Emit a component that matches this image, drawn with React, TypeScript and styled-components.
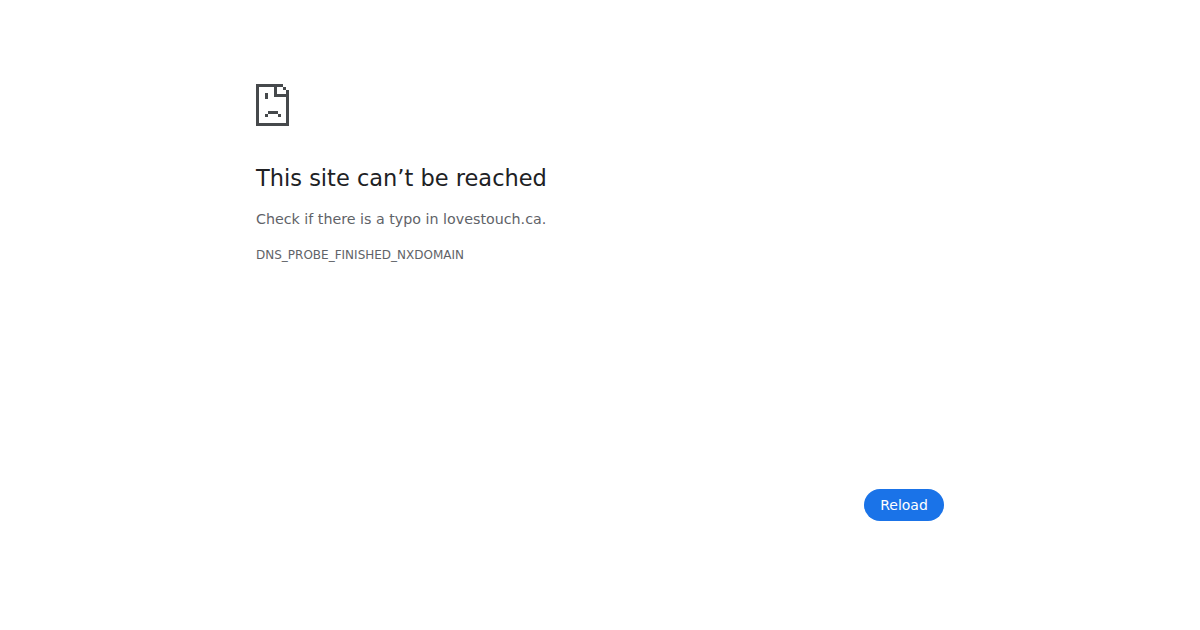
import styled, { createGlobalStyle } from 'styled-components'

const GlobalStyle = createGlobalStyle`
  html, body {
    margin: 0;
    background: #fff;
  }
  body {
    font-family: 'DejaVu Sans', sans-serif;
    font-size: 15px;
    color: #5f6368;
  }
`

const SadFile = () => (
  <Icon viewBox="0 0 33 42" width="33" height="42" aria-hidden="true">
    <path
      fill="#46494c"
      fillRule="evenodd"
      d="M0 0H27V3H30V6H33V42H0ZM3 3V39H30V13H18V3ZM21 3V10H30V6H27V3Z"
    />
    <path fill="#46494c" d="M9 9h3v6H9zM12 27h10v3H12zM9 30h3v3H9zM22 30h3v3h-3z" />
  </Icon>
)

export default function App() {
  return (
    <>
      <GlobalStyle />
      <Page>
        <Wrapper>
          <div>
            <SadFile />
            <Heading>This site can’t be reached</Heading>
            <Message>Check if there is a typo in lovestouch.ca.</Message>
            <ErrorCode>DNS_PROBE_FINISHED_NXDOMAIN</ErrorCode>
          </div>
          <Actions>
            <ReloadButton type="button">Reload</ReloadButton>
          </Actions>
        </Wrapper>
      </Page>
    </>
  )
}

const Page = styled.main`
  display: flex;
  justify-content: center;
  height: 630px;
  padding-top: 84px;
  box-sizing: border-box;
`

const Wrapper = styled.div`
  display: flex;
  flex-direction: column;
  justify-content: space-between;
  width: 688px;
  height: 437px;
`

const Icon = styled.svg`
  display: block;
  shape-rendering: crispEdges;
`

const Heading = styled.h1`
  margin: 37px 0 0;
  font-size: 22.5px;
  font-weight: 400;
  line-height: 30px;
  color: #202124;
`

const Message = styled.p`
  margin: 16px 0 0;
  font-size: 14.25px;
  line-height: 20px;
`

const ErrorCode = styled.div`
  margin-top: 18px;
  font-size: 12px;
  line-height: 16px;
`

const Actions = styled.div`
  display: flex;
  justify-content: flex-end;
`

const ReloadButton = styled.button`
  width: 80px;
  height: 32px;
  padding: 0;
  border: 0;
  border-radius: 16px;
  background: #1a73e8;
  color: #fff;
  font-family: inherit;
  font-size: 14px;
`
